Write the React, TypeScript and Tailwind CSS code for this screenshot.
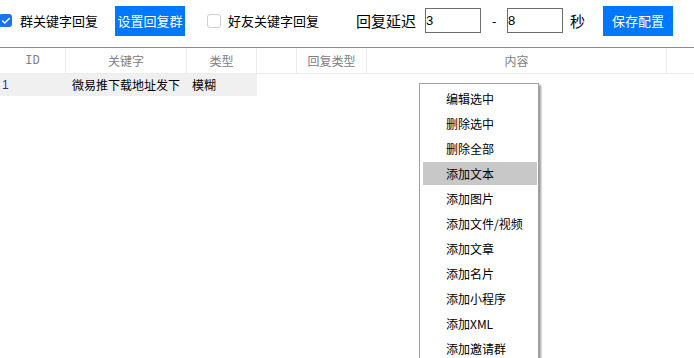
import { Check } from "lucide-react";

const font = { fontFamily: '"Noto Sans CJK SC", "Noto Sans", sans-serif' };

const menuItems = [
  "编辑选中",
  "删除选中",
  "删除全部",
  "添加文本",
  "添加图片",
  "添加文件/视频",
  "添加文章",
  "添加名片",
  "添加小程序",
  "添加XML",
  "添加邀请群",
];

const columns = [
  { title: "ID", w: "w-[66px]" },
  { title: "关键字", w: "w-[121px]" },
  { title: "类型", w: "w-[70px]" },
  { title: "", w: "w-[40px]" },
  { title: "回复类型", w: "w-[70px]" },
  { title: "内容", w: "w-[300px]" },
  { title: "", w: "flex-1" },
];

export default function App() {
  return (
    <div className="relative h-[358px] w-[694px] overflow-hidden bg-white text-black" style={font}>
      {/* 顶部工具栏 */}
      <div className="flex h-[48px] items-center border-b border-[#8c8c8c] pb-[6px] text-[13px]">
        <span className="flex h-[13px] w-[13px] items-center justify-center rounded-[3px] bg-[#1a73e8] ml-[-1px]">
          <Check size={10} strokeWidth={3.5} className="text-white" />
        </span>
        <span className="ml-[8px] w-[95px] leading-none">群关键字回复</span>
        <button className="flex h-[30px] w-[70px] items-center justify-center bg-[#0077ff] text-[13px] text-white">
          设置回复群
        </button>
        <span className="ml-[22px] h-[14px] w-[14px] rounded-[3px] border border-[#cfcfcf] bg-white" />
        <span className="ml-[7px] w-[128px] leading-none">好友关键字回复</span>
        <span className="w-[69px] text-[15px] leading-none">回复延迟</span>
        <input
          readOnly
          value="3"
          className="h-[25px] w-[56px] border border-[#6e6e6e] px-0 text-[13px] outline-none"
          style={{ fontFamily: '"Liberation Sans", sans-serif' }}
        />
        <span className="ml-[11px] w-[15px] text-[13px] leading-none">-</span>
        <input
          readOnly
          value="8"
          className="h-[25px] w-[56px] border border-[#6e6e6e] px-0 text-[13px] outline-none"
          style={{ fontFamily: '"Liberation Sans", sans-serif' }}
        />
        <span className="ml-[7px] w-[33px] text-[15px] leading-none">秒</span>
        <button className="flex h-[30px] w-[70px] items-center justify-center bg-[#0077ff] text-[13px] text-white">
          保存配置
        </button>
      </div>

      {/* 表头 */}
      <div className="flex h-[26px] border-b border-[#ebebeb] text-[12px] text-[#808080]">
        {columns.map((c, i) => (
          <div
            key={i}
            className={`${c.w} flex items-center justify-center border-r border-[#ebebeb] last:border-r-0`}
            style={c.title === "ID" ? { fontFamily: '"Liberation Mono", monospace' } : undefined}
          >
            {c.title}
          </div>
        ))}
      </div>

      {/* 数据行 */}
      <div className="flex h-[22px] items-center text-[12px]">
        <div className="flex h-full w-[257px] items-center bg-[#f0f0f0]">
          <span className="w-[65px] pl-[2px] text-[#1f3a8a]" style={{ fontFamily: '"Liberation Sans", sans-serif' }}>1</span>
          <span className="w-[121px] pl-[7px]">微易推下载地址发下</span>
          <span className="pl-[6px]">模糊</span>
        </div>
      </div>

      {/* 右键菜单 */}
      <div className="absolute left-[419px] top-[83px] w-[120px] border border-[#a0a0a0] bg-white pb-[2px] pl-[3px] pr-[1px] pt-[2px] text-[12px] shadow-[2px_2px_2px_rgba(0,0,0,0.4)]">
        {menuItems.map((item, i) => (
          <div key={item} className="flex h-[25px] py-px">
            <div className={`flex flex-1 items-center pl-[23px] ${i === 3 ? "bg-[#c8c8c8]" : ""}`}>{item}</div>
          </div>
        ))}
      </div>
    </div>
  );
}
